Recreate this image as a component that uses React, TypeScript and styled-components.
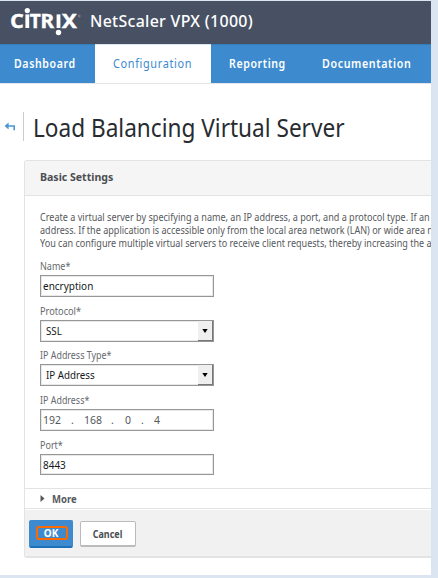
import React from "react";
import styled, { createGlobalStyle } from "styled-components";

const Global = createGlobalStyle`
  * { box-sizing: border-box; }
  body { margin: 0; background: #dbe5f1; font-family: "Noto Sans", "Open Sans", sans-serif; overflow: hidden; }
`;

const Frame = styled.div`
  width: 438px;
  height: 578px;
  padding: 1px 7px 3px 0;
  background: #dbe5f1;
`;
const Page = styled.div`
  height: 574px;
  background: #fff;
  overflow: hidden;
`;
const Header = styled.header`
  height: 43px;
  background: #485164;
  display: flex;
  align-items: center;
  padding-left: 10px;
  color: #fff;
`;
const Fit = styled.span<{ $x: number; $center?: boolean }>`
  display: inline-block;
  white-space: pre;
  transform: scaleX(${(p) => p.$x});
  transform-origin: ${(p) => (p.$center ? "50%" : "0")} 50%;
`;
const Product = styled.div`
  font-size: 16px;
  font-weight: 500;
  line-height: 24px;
  letter-spacing: 0.3px;
  padding-left: 8px;
  margin-top: -4px;
`;
const Nav = styled.nav`
  height: 40px;
  background: #3d8bce;
  border-bottom: 1px solid #e3e5e8;
  display: grid;
  grid-template-columns: 95px 116px 92px 128px;
`;
const Tab = styled.a<{ $active?: boolean; $inset: number }>`
  padding-left: ${(p) => p.$inset}px;
  font-size: 12px;
  line-height: 38px;
  letter-spacing: 0.7px;
  font-weight: ${(p) => (p.$active ? 400 : 600)};
  color: ${(p) => (p.$active ? "#3d8bce" : "#fff")};
  background: ${(p) => (p.$active ? "#fff" : "transparent")};
  border-top: 1px solid ${(p) => (p.$active ? "#dce5ee" : "#337db9")};
  white-space: nowrap;
  overflow: hidden;
`;
const TitleRow = styled.div`
  display: flex;
  height: 29px;
  margin-top: 28px;
  padding-left: 4px;
`;
const Back = styled.svg`
  margin-top: 10px;
  width: 12px;
  height: 10px;
  flex: none;
`;
const Title = styled.h1`
  margin: 0 0 0 7px;
  padding-left: 8.5px;
  border-left: 1px solid #ccc;
  height: 29px;
  font-size: 25px;
  line-height: 31px;
  font-weight: 400;
  color: #272c30;
  white-space: nowrap;
`;
const Panel = styled.section`
  margin: 19px 0 0 24px;
  width: 440px;
  height: 398px;
  border: 1px solid #e3e3e3;
  border-bottom-width: 2px;
  border-radius: 3px;
  overflow: hidden;
`;
const PanelHead = styled.div`
  height: 35px;
  padding-left: 15px;
  background: #f5f5f5;
  border-bottom: 1px solid #e3e3e3;
  font-size: 11px;
  font-weight: 700;
  line-height: 31px;
  color: #4b4e52;
`;
const Body = styled.div`
  height: 292px;
  padding: 15px 0 0 15px;
`;
const Intro = styled.div`
  font-size: 10px;
  line-height: 13px;
  color: #56595d;
  height: 43px;
  margin-bottom: 5px;
`;
const Line = styled.div`
  white-space: nowrap;
`;
const Field = styled.div<{ $h: number }>`
  height: ${(p) => p.$h}px;
`;
const Label = styled.label`
  display: block;
  font-size: 10px;
  height: 16px;
  line-height: 14px;
  color: #66696d;
`;
const Box = styled.div<{ $h?: number; $pad?: number; $soft?: boolean }>`
  width: 174px;
  height: ${(p) => p.$h ?? 22}px;
  border: 1px solid #969696;
  box-shadow: inset 0 0 0 1px #e8e8e8;
  background: #fff;
  padding-left: ${(p) => p.$pad ?? 2}px;
  font-size: 10.5px;
  line-height: 20px;
  color: ${(p) => (p.$soft ? "#55585c" : "#15171a")};
  display: flex;
`;
const Drop = styled.span`
  width: 15px;
  margin-left: auto;
  background: #efefef;
  border-right: 1px solid #777;
  border-bottom: 1px solid #777;
  display: flex;
  align-items: center;
  justify-content: center;
`;
const Octet = styled.span<{ $w: number }>`
  width: ${(p) => p.$w}px;
`;
const More = styled.div`
  height: 21px;
  border-top: 1px solid #e3e3e3;
  border-bottom: 1px solid #e3e3e3;
  display: flex;
  align-items: center;
  padding-left: 15px;
  gap: 7px;
  font-size: 10px;
  font-weight: 700;
  color: #56595d;
`;
const Footer = styled.div`
  height: 48px;
  margin-top: 1px;
  padding: 10px 0 0 4px;
  background: #f1f1f1;
  display: flex;
  gap: 7px;
`;
const Button = styled.button<{ $primary?: boolean }>`
  font: 700 10px "Noto Sans", sans-serif;
  padding: 0;
  display: flex;
  justify-content: center;
  align-items: center;
  border-radius: 2px;
  width: ${(p) => (p.$primary ? 44 : 56)}px;
  height: ${(p) => (p.$primary ? 28 : 26)}px;
  margin-top: ${(p) => (p.$primary ? 0 : 1)}px;
  color: ${(p) => (p.$primary ? "#fff" : "#4b4e52")};
  background: ${(p) => (p.$primary ? "#3d8bce" : "#fff")};
  border: 1px solid ${(p) => (p.$primary ? "#3d8bce" : "#bbb")};
  border-bottom: 2px solid ${(p) => (p.$primary ? "#1a71bb" : "#bbb")};
`;
const Ring = styled.span`
  width: 32px;
  height: 14px;
  margin: -2px 0 0 2px;
  border: 2px solid #ff6a00;
  border-radius: 3px;
  line-height: 10px;
  text-align: center;
  padding-right: 2px;
`;

const Logo = () => (
  <svg width="72" height="34" viewBox="10 5 72 34" fill="#fff" fontFamily="Noto Sans, sans-serif" fontWeight="700" fontSize="19">
    <text x="10.3" y="26.8" stroke="#fff" strokeWidth="0.5" textLength="13.4" lengthAdjust="spacingAndGlyphs">C</text>
    <rect x="25.4" y="13.4" width="3.8" height="13.6" />
    <circle cx="27.3" cy="9.6" r="2.6" />
    <text x="29.8" y="26.8" stroke="#fff" strokeWidth="0.4" textLength="11" lengthAdjust="spacingAndGlyphs">T</text>
    <text x="40.6" y="26.8" stroke="#fff" strokeWidth="0.4" textLength="13.6" lengthAdjust="spacingAndGlyphs">R</text>
    <rect x="56.6" y="13.4" width="3.8" height="13.6" />
    <circle cx="58.5" cy="31.5" r="2.7" />
    <text x="61.8" y="26.8" stroke="#fff" strokeWidth="0.4" textLength="15.2" lengthAdjust="spacingAndGlyphs">X</text>
    <circle cx="79.3" cy="15" r="0.9" fill="none" stroke="#aab0bc" strokeWidth="0.5" />
  </svg>
);

const Arrow = () => (
  <svg width="6" height="4" viewBox="0 0 6 4"><path d="M0.3 0H5.7L3 4Z" fill="#000" /></svg>
);

export default function App() {
  return (
    <Frame>
      <Global />
      <Page>
        <Header>
          <Logo />
          <Product><Fit $x={0.995}>NetScaler VPX (1000)</Fit></Product>
        </Header>
        <Nav>
          <Tab $inset={14}><Fit $x={0.88}>Dashboard</Fit></Tab>
          <Tab $inset={18} $active><Fit $x={0.91}>Configuration</Fit></Tab>
          <Tab $inset={18}><Fit $x={0.88}>Reporting</Fit></Tab>
          <Tab $inset={19}><Fit $x={0.89}>Documentation</Fit></Tab>
        </Nav>
        <TitleRow>
          <Back viewBox="0 0 12 10"><path d="M0.6 4L4.6 0.6V3.2H11V8.2H9.4V4.8H4.6V7.4Z" fill="#4a95d6" /></Back>
          <Title><Fit $x={0.904}>Load Balancing Virtual Server</Fit></Title>
        </TitleRow>
        <Panel>
          <PanelHead><Fit $x={0.96}>Basic Settings</Fit></PanelHead>
          <Body>
            <Intro>
              <Line><Fit $x={0.907}>Create a virtual server by specifying a name, an IP address, a port, and a protocol type. If an a</Fit></Line>
              <Line><Fit $x={0.905}>address. If the application is accessible only from the local area network (LAN) or wide area n</Fit></Line>
              <Line><Fit $x={0.905}>You can configure multiple virtual servers to receive client requests, thereby increasing the a</Fit></Line>
            </Intro>
            <Field $h={45}>
              <Label><Fit $x={0.9}>Name*</Fit></Label>
              <Box><Fit $x={0.95}>encryption</Fit></Box>
            </Field>
            <Field $h={44}>
              <Label><Fit $x={0.92}>Protocol*</Fit></Label>
              <Box $pad={5}><Fit $x={0.93}>SSL</Fit><Drop><Arrow /></Drop></Box>
            </Field>
            <Field $h={45}>
              <Label><Fit $x={0.89}>IP Address Type*</Fit></Label>
              <Box $pad={5}><Fit $x={0.93}>IP Address</Fit><Drop><Arrow /></Drop></Box>
            </Field>
            <Field $h={45}>
              <Label><Fit $x={0.89}>IP Address*</Fit></Label>
              <Box $soft>
                <Octet $w={28}>192</Octet><Octet $w={13}>.</Octet>
                <Octet $w={27}>168</Octet><Octet $w={14}>.</Octet>
                <Octet $w={16}>0</Octet><Octet $w={13}>.</Octet>
                <Octet $w={10}>4</Octet>
              </Box>
            </Field>
            <Field $h={40}>
              <Label><Fit $x={0.9}>Port*</Fit></Label>
              <Box $h={21}><Fit $x={0.95}>8443</Fit></Box>
            </Field>
          </Body>
          <More>
            <svg width="5" height="7" viewBox="0 0 5 7"><path d="M0.5 0L4.5 3.5L0.5 7Z" fill="#56595d" /></svg>
            <Fit $x={0.95}>More</Fit>
          </More>
          <Footer>
            <Button $primary><Ring>OK</Ring></Button>
            <Button><Fit $x={0.9} $center>Cancel</Fit></Button>
          </Footer>
        </Panel>
      </Page>
    </Frame>
  );
}
